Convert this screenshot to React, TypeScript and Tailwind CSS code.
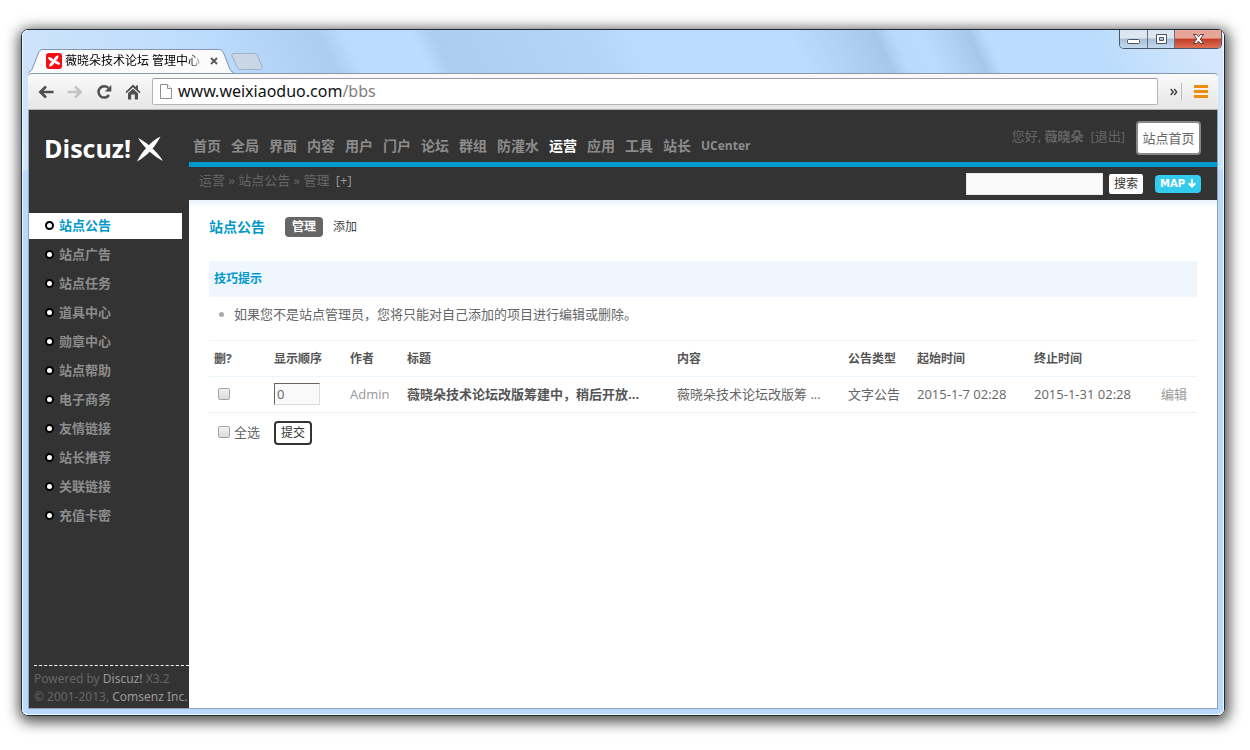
import { useState } from 'react';
import { clsx } from 'clsx';

const NAV_ITEMS = ['首页', '全局', '界面', '内容', '用户', '门户', '论坛', '群组', '防灌水', '运营', '应用', '工具', '站长', 'UCenter'];

const MENU_ITEMS = [
    '站点公告',
    '站点广告',
    '站点任务',
    '道具中心',
    '勋章中心',
    '站点帮助',
    '电子商务',
    '友情链接',
    '站长推荐',
    '关联链接',
    '充值卡密',
];

const announcements = [
    {
        id: 1,
        order: 0,
        author: 'Admin',
        title: '薇晓朵技术论坛改版筹建中，稍后开放...',
        content: '薇晓朵技术论坛改版筹 ...',
        type: '文字公告',
        start: '2015-1-7 02:28',
        end: '2015-1-31 02:28',
    },
];

const CHECKBOX =
    'block size-[12px] appearance-none rounded-[2px] border border-[#a5a5a5] bg-gradient-to-b from-[#f2f2f2] to-[#d9d9d9] checked:bg-[#0099cc]';

const WindowControls = () => (
    <div className="-mr-[4px] flex h-[19px] overflow-hidden rounded-b-[5px] border border-t-0 border-[#48586c]">
        <button aria-label="最小化" className="flex w-[28px] items-center justify-center border-r border-[#5f7187] bg-gradient-to-b from-[#dde7f2] from-45% via-[#a9bfd6] via-50% to-[#c3d9ef]">
            <svg width="13" height="18" viewBox="0 0 13 18">
                <rect x="0.5" y="9.5" width="12" height="4" rx="1" fill="#fff" stroke="#4b5464" />
            </svg>
        </button>
        <button aria-label="最大化" className="flex w-[27px] items-center justify-center border-r border-[#5f7187] bg-gradient-to-b from-[#dde7f2] from-45% via-[#a9bfd6] via-50% to-[#c3d9ef]">
            <svg width="13" height="18" viewBox="0 0 13 18">
                <path d="M1.500 4.500h10v9h-10z M4.500 7.500v3h4v-3z" fill="#fff" fillRule="evenodd" stroke="#4b5464" />
            </svg>
        </button>
        <button aria-label="关闭" className="flex w-[46px] items-center justify-center bg-gradient-to-b from-[#e8a698] from-45% via-[#c43c28] via-50% to-[#dc7052]">
            <svg width="13" height="18" viewBox="0 0 13 18">
                <path d="M1.500 4.500h3l2 2.300 2-2.300h3L8.300 9l3.200 4.500h-3l-2-2.300-2 2.300h-3L4.700 9z" fill="#fff" stroke="#5d3a42" />
            </svg>
        </button>
    </div>
);

const TabStrip = () => (
    <div className="flex h-[43px] items-start justify-between">
        <div className="flex items-end self-end">
            <div className="relative h-[24px] w-[206px]">
                <svg className="absolute inset-0" width="206" height="24" viewBox="0 0 206 24">
                    <path
                        d="M0 24C3 23 4 21 5 18L10 5C11 2 12 0.500 15 0.500H190C194 0.500 195 2 196 5L201 18C202 21 203 23 206 24Z"
                        fill="#fbfbfc"
                    />
                    <path
                        d="M0 23.500C3 22.500 4 21 5 18L10 5C11 2 12 0.500 15 0.500H190C194 0.500 195 2 196 5L201 18C202 21 203 23 206 23.500"
                        fill="none"
                        stroke="#8496ae"
                    />
                </svg>
                <div className="relative flex h-full items-center pl-[18px]">
                    <svg width="16" height="16" viewBox="0 0 16 16" className="shrink-0">
                        <rect width="16" height="16" rx="3" fill="#f80b12" />
                        <path
                            d="M2 4.500C4 3.500 6.300 4.800 7.500 6.500C8.600 4.200 10.300 2.300 12.300 2.200C13.200 4.200 11.500 6.500 9.800 7.800C11.800 8.200 14 9.500 14.300 11.300C12.500 12.300 10 11.300 8.500 9.800C7.300 12 5.500 13.800 3.300 13.600C2.800 11.700 4.300 9.700 6 8.500C4.200 8 2.300 6.500 2 4.500Z"
                            fill="#fff"
                        />
                    </svg>
                    <span className="ml-[3px] w-[138px] overflow-hidden bg-gradient-to-r from-black from-88% to-[#ddd] bg-clip-text text-[12px] leading-[20px] whitespace-nowrap text-transparent">
                        薇晓朵技术论坛 管理中心
                    </span>
                    <button aria-label="关闭标签页" className="ml-[7px]">
                        <svg width="8" height="8" viewBox="0 0 8 8">
                            <path d="M1 1l6 6M7 1l-6 6" stroke="#555" strokeWidth="1.800" />
                        </svg>
                    </button>
                </div>
            </div>
            <button aria-label="新标签页" className="-ml-[3px] pb-[3px]">
                <svg width="32" height="17" viewBox="0 0 32 17">
                    <path
                        d="M3 0.500H24C25.500 0.500 26 1 26.500 2L31 14C31.500 15.500 31 16.500 29.500 16.500H9C7.500 16.500 7 16 6.500 15L1 3C0.500 1.500 1 0.500 3 0.500Z"
                        fill="#c9d6e5"
                        stroke="#a2b0c4"
                    />
                </svg>
            </button>
        </div>
        <WindowControls />
    </div>
);

const Toolbar = () => (
    <div className="flex h-[37px] items-center rounded-t-[4px] border-t border-b border-t-[#8698b0] border-b-[#b4b4b4] bg-gradient-to-b from-[#fafafa] to-[#e6e6e6] px-[10px]">
        <button aria-label="后退">
            <svg width="16" height="16" viewBox="0 0 16 16" fill="none" stroke="#4f4f4f" strokeWidth="2.600">
                <path d="M8 2.500L2.300 8L8 13.500M2.500 8H15.500" />
            </svg>
        </button>
        <button aria-label="前进" className="ml-[13px]">
            <svg width="16" height="16" viewBox="0 0 16 16" fill="none" stroke="#c4c4c4" strokeWidth="2.600">
                <path d="M8 2.500L13.700 8L8 13.500M13.500 8H0.500" />
            </svg>
        </button>
        <button aria-label="刷新" className="ml-[13px]">
            <svg width="16" height="16" viewBox="0 0 16 16">
                <path d="M13 11A5.700 5.700 0 1 1 12.300 3.900" fill="none" stroke="#4f4f4f" strokeWidth="2.500" />
                <path d="M15.300 1V7.500H8.800Z" fill="#4f4f4f" />
            </svg>
        </button>
        <button aria-label="主页" className="ml-[13px]">
            <svg width="16" height="16" viewBox="0 0 16 16" fill="#4f4f4f">
                <path d="M8 0.500L10.800 3.300V1.500H13V5.500L15.500 8L14.500 9.200L8 3.200L1.500 9.200L0.500 8Z" />
                <path d="M8 4.700L13 9.300V15.500H9.800V10.500H6.200V15.500H3V9.300Z" />
            </svg>
        </button>
        <div className="ml-[11px] flex h-[27px] flex-1 items-center rounded-[2px] border border-[#b5b5b9] border-t-[#9c9ca4] bg-white pl-[7px]">
            <svg width="12" height="15" viewBox="0 0 12 15" fill="#fff" stroke="#8d8d8d">
                <path d="M0.500 0.500H7.500L11.500 4.500V14.500H0.500Z" />
                <path d="M7.500 0.500V4.500H11.500" />
            </svg>
            <a href="#bbs" className="ml-[6px] pb-[2px] font-['Noto_Sans',sans-serif] text-[16px] leading-[24px] text-[#111]">
                www.weixiaoduo.com<span className="text-[#808080]">/bbs</span>
            </a>
        </div>
        <button aria-label="更多扩展" className="ml-[12px]">
            <svg width="8" height="8" viewBox="0 0 8 8" fill="none" stroke="#444" strokeWidth="1.500">
                <path d="M0.700 1L3.200 4L0.700 7M4.200 1L6.700 4L4.200 7" />
            </svg>
        </button>
        <span className="mx-[3px] h-[17px] w-px bg-[#bbb]" />
        <button aria-label="菜单" className="ml-[9px]">
            <svg width="14" height="13" viewBox="0 0 14 13" fill="#f08c00">
                <path d="M0 0h14v3H0zM0 5h14v3H0zM0 10h14v3H0z" />
            </svg>
        </button>
    </div>
);

const Logo = () => (
    <a href="#home" aria-label="Discuz! X" className="flex h-[27px] items-center text-white">
        <span className="w-[90px] font-['Open_Sans',sans-serif] text-[25px] leading-[27px] font-bold">Discuz!</span>
        <svg width="28" height="26" viewBox="0 0 28 26" fill="#fff" className="ml-[2px]">
            <path d="M2 2C8 4.500 20.500 14.500 27 25C17.500 20 8 11.500 2 2Z" />
            <path d="M24.500 0.500C19.500 10 11.500 20 1 25.500C6 15.500 14.500 5.500 24.500 0.500Z" />
        </svg>
    </a>
);

const Sidebar = ({ active, onSelect }: { active: string; onSelect: (name: string) => void }) => (
    <aside className="flex w-[160px] shrink-0 flex-col bg-[#333]">
        <div className="h-[103px] pt-[25px] pl-[15px]">
            <Logo />
        </div>
        <ul className="flex flex-col gap-[3px] pr-[7px]">
            {MENU_ITEMS.map((item) => (
                <li key={item}>
                    <a
                        href={`#${item}`}
                        onClick={() => onSelect(item)}
                        className={clsx(
                            'flex h-[26px] items-center gap-[5px] pb-[2px] pl-[16px] text-[13px] leading-[20px] font-bold',
                            item === active ? 'bg-white text-[#0099cc]' : 'text-[#8c8c8c]'
                        )}
                    >
                        <span className="size-[9px] rounded-full border-2 border-black bg-white" />
                        {item}
                    </a>
                </li>
            ))}
        </ul>
        <div className="mt-auto ml-[5px] border-t border-dashed border-white pt-[4px] pb-[2px] font-['Noto_Sans',sans-serif] text-[12px] leading-[18px] whitespace-nowrap text-[#666]">
            <p>
                Powered by <a href="#discuz" className="text-[#999]">Discuz!</a> X3.2
            </p>
            <p>
                © 2001-2013, <a href="#comsenz" className="text-[#999]">Comsenz Inc.</a>
            </p>
        </div>
    </aside>
);

const Header = () => (
    <header className="bg-[#333] text-[13px] leading-[20px] text-[#666]">
        <div className="flex h-[57px] items-start border-b-[5px] border-[#0099cc] pr-[16px] pl-[4px]">
            <nav className="flex flex-1 items-center gap-[10px] pt-[26px] text-[14px] font-bold text-[#8c8c8c]">
                {NAV_ITEMS.map((item) => (
                    <a
                        key={item}
                        href={`#${item}`}
                        className={clsx(item === '运营' && 'text-white', item === 'UCenter' && 'text-[12px]')}
                    >
                        {item}
                    </a>
                ))}
            </nav>
            <p className="pt-[16px]">
                您好, <b>薇晓朵</b>
            </p>
            <a href="#logout" className="ml-[7px] pt-[16px]">[退出]</a>
            <button className="mt-[11px] ml-[11px] h-[34px] w-[65px] rounded-[4px] border-2 border-[#888] bg-white">
                站点首页
            </button>
        </div>
        <div className="flex h-[33px] items-center pr-[16px] pl-[10px]">
            <p className="flex-1 pb-[8px]">
                运营 » 站点公告 » 管理 <a href="#add" className="ml-[3px] text-[#999]">[+]</a>
            </p>
            <input type="text" aria-label="搜索" className="h-[22px] w-[137px] border border-[#e8e8e8] bg-[#f9f9f9] px-[4px] outline-none" />
            <button className="ml-[6px] h-[20px] w-[34px] rounded-[2px] bg-white text-[12px] text-[#333]">搜索</button>
            <button className="ml-[12px] flex h-[18px] w-[46px] items-center justify-center gap-[3px] rounded-[4px] bg-[#33ccee] font-['DejaVu_Sans',sans-serif] text-[10px] leading-[18px] font-bold text-white">
                MAP
                <svg width="8" height="9" viewBox="0 0 8 9" fill="none" stroke="#fff" strokeWidth="2">
                    <path d="M4 0V7.500M0.700 4.200L4 7.500L7.300 4.200" />
                </svg>
            </button>
        </div>
    </header>
);

const AnnouncementTable = () => (
    <form onSubmit={(e) => e.preventDefault()}>
        <table className="w-full table-fixed text-left text-[#666]">
            <thead>
                <tr className="h-[36px] border-y border-[#edf5fc] text-[12px] text-[#555] [&>th]:pl-[5px]">
                    <th className="w-[60px]">删?</th>
                    <th className="w-[76px]">显示顺序</th>
                    <th className="w-[57px]">作者</th>
                    <th>标题</th>
                    <th className="w-[171px]">内容</th>
                    <th className="w-[69px]">公告类型</th>
                    <th className="w-[117px]">起始时间</th>
                    <th className="w-[127px]">终止时间</th>
                    <th className="w-[41px]" />
                </tr>
            </thead>
            <tbody>
                {announcements.map((item) => (
                    <tr key={item.id} className="h-[36px] border-b border-[#e3eff5] whitespace-nowrap [&>td]:pb-[2px] [&>td]:pl-[5px]">
                        <td>
                            <input type="checkbox" aria-label="删除" className={clsx(CHECKBOX, 'ml-[4px]')} />
                        </td>
                        <td>
                            <input
                                type="text"
                                aria-label="显示顺序"
                                defaultValue={item.order}
                                className="block h-[22px] w-[46px] border border-[#ddd] border-t-[#666] border-l-[#666] bg-[#f9f9f9] px-[2px] outline-none"
                            />
                        </td>
                        <td>
                            <a href="#admin" className="text-[#999]">{item.author}</a>
                        </td>
                        <td className="font-bold text-[#555]">{item.title}</td>
                        <td>{item.content}</td>
                        <td>{item.type}</td>
                        <td>{item.start}</td>
                        <td>{item.end}</td>
                        <td>
                            <a href="#edit" className="text-[#999]">编辑</a>
                        </td>
                    </tr>
                ))}
            </tbody>
        </table>
        <div className="flex h-[40px] items-center pl-[9px]">
            <label className="flex w-[56px] items-center gap-[4px] pb-[2px] whitespace-nowrap">
                <input type="checkbox" className={CHECKBOX} />
                全选
            </label>
            <button className="h-[24px] w-[38px] rounded-[4px] border-2 border-[#333] bg-white text-[12px] text-[#333]">提交</button>
        </div>
    </form>
);

const AdminPanel = () => {
    const [active, setActive] = useState('站点公告');

    return (
        <div className="flex flex-1 border-r border-b border-l border-[#8fa3bb] bg-white">
            <Sidebar active={active} onSelect={setActive} />
            <div className="flex min-w-0 flex-1 flex-col">
                <Header />
                <main className="flex-1 bg-gradient-to-b from-[#e6f2fd] to-white to-[8px] px-[20px] pt-[17px] text-[13px] leading-[20px] text-[#666]">
                    <div className="flex h-[20px] items-center">
                        <h1 className="text-[14px] font-bold text-[#0099cc]">站点公告</h1>
                        <a href="#manage" className="ml-[20px] rounded-[4px] bg-[#666] px-[7px] text-[12px] font-bold text-white">管理</a>
                        <a href="#add" className="ml-[10px] text-[12px] text-[#444]">添加</a>
                    </div>
                    <section className="mt-[24px]">
                        <h2 className="h-[36px] bg-[#f0f6fd] pl-[5px] text-[12px] leading-[36px] font-bold text-[#0099cc]">技巧提示</h2>
                        <ul className="h-[43px] pt-[7px] pl-[10px]">
                            <li className="flex items-center gap-[10px]">
                                <span className="size-[5px] rounded-full bg-[#aaa]" />
                                如果您不是站点管理员，您将只能对自己添加的项目进行编辑或删除。
                            </li>
                        </ul>
                    </section>
                    <AnnouncementTable />
                </main>
            </div>
        </div>
    );
};

export default function App() {
    return (
        <div className="flex min-h-screen flex-col bg-white pt-[29px] pr-[25px] pb-[34px] pl-[21px] font-['Open_Sans','Noto_Sans_CJK_SC',sans-serif]">
            <div className="flex flex-1 flex-col rounded-[7px] border border-[#1f2a36] shadow-[1px_3px_14px_3px_rgba(0,0,0,0.7)]">
                <div className="flex flex-1 flex-col rounded-[6px] border border-t-0 border-white/80 bg-[#b9dafb] bg-[linear-gradient(65deg,#d3e5f9_0px,#bcdcfd_220px,#abcdf0_325px,#bcdcfd_350px,#bcdcfd_410px,#abcdf0_430px,#b3d5f8_570px,#bcdcfd_610px,#bcdcfd_750px,#a6c8e8_830px,#b9d9fb_845px,#bcdcfd_870px,#a6c8e8_915px,#bcdcfd_930px,#bcdcfd_1030px,#d3e6fb_1120px)] bg-[length:100%_140px] bg-no-repeat px-[5px] pb-[5px]">
                    <TabStrip />
                    <Toolbar />
                    <AdminPanel />
                </div>
            </div>
        </div>
    );
}
